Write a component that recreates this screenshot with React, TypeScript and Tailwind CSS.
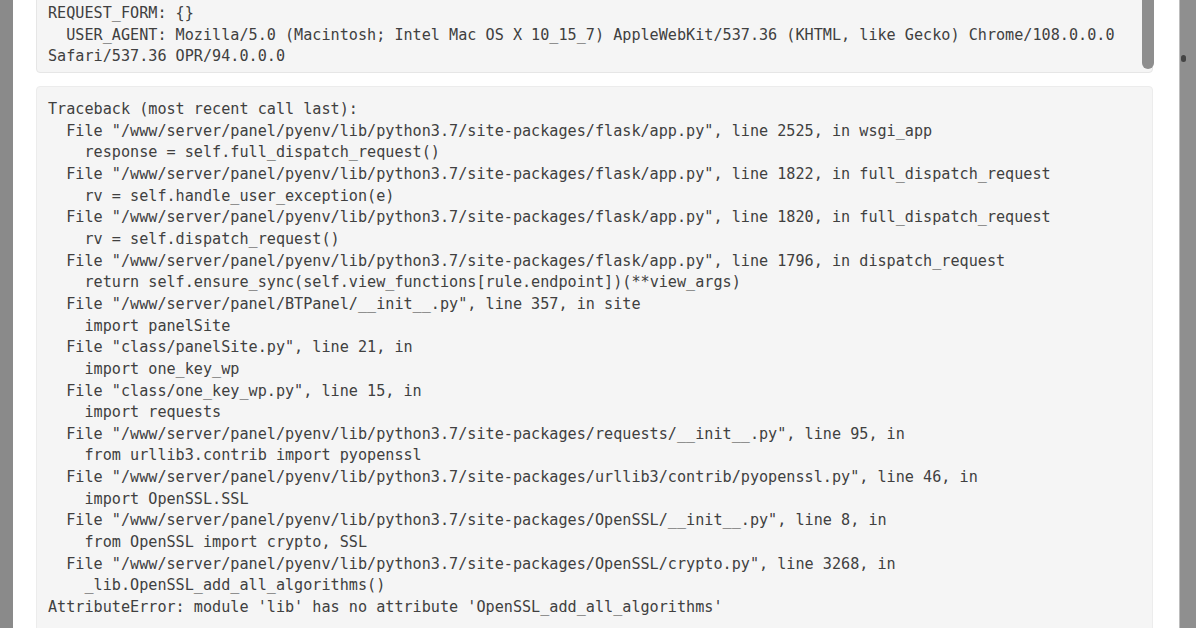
import React from 'react';

const requestLines = `REQUEST_FORM: {}
  USER_AGENT: Mozilla/5.0 (Macintosh; Intel Mac OS X 10_15_7) AppleWebKit/537.36 (KHTML, like Gecko) Chrome/108.0.0.0 Safari/537.36 OPR/94.0.0.0`;

const traceback = `Traceback (most recent call last):
  File "/www/server/panel/pyenv/lib/python3.7/site-packages/flask/app.py", line 2525, in wsgi_app
    response = self.full_dispatch_request()
  File "/www/server/panel/pyenv/lib/python3.7/site-packages/flask/app.py", line 1822, in full_dispatch_request
    rv = self.handle_user_exception(e)
  File "/www/server/panel/pyenv/lib/python3.7/site-packages/flask/app.py", line 1820, in full_dispatch_request
    rv = self.dispatch_request()
  File "/www/server/panel/pyenv/lib/python3.7/site-packages/flask/app.py", line 1796, in dispatch_request
    return self.ensure_sync(self.view_functions[rule.endpoint])(**view_args)
  File "/www/server/panel/BTPanel/__init__.py", line 357, in site
    import panelSite
  File "class/panelSite.py", line 21, in
    import one_key_wp
  File "class/one_key_wp.py", line 15, in
    import requests
  File "/www/server/panel/pyenv/lib/python3.7/site-packages/requests/__init__.py", line 95, in
    from urllib3.contrib import pyopenssl
  File "/www/server/panel/pyenv/lib/python3.7/site-packages/urllib3/contrib/pyopenssl.py", line 46, in
    import OpenSSL.SSL
  File "/www/server/panel/pyenv/lib/python3.7/site-packages/OpenSSL/__init__.py", line 8, in
    from OpenSSL import crypto, SSL
  File "/www/server/panel/pyenv/lib/python3.7/site-packages/OpenSSL/crypto.py", line 3268, in
    _lib.OpenSSL_add_all_algorithms()
AttributeError: module 'lib' has no attribute 'OpenSSL_add_all_algorithms'

`;

const mono = "font-['DejaVu_Sans_Mono','Liberation_Mono',monospace] text-[15.15px] leading-[21.65px] text-[#404040]";

export default function App() {
  return (
    <div className="flex h-[628px] w-[1196px] overflow-hidden bg-[#8c8c8c]">
      <div className="w-[13px] shrink-0 bg-[#8a8a8a]" />
      <div className="flex flex-1 flex-col overflow-hidden bg-white pl-[23px] pr-[26px]">
        <div className="relative -mt-[8px] rounded-b-[4px] border border-[#e6e6e6] bg-[#f5f5f5]">
          <pre className={`${mono} whitespace-pre-wrap break-words px-[11px] pb-[4px] pt-[10px] pr-[30px]`}>
            {requestLines}
          </pre>
          <div className="absolute right-[-2px] top-0 h-[76px] w-[12px] rounded-b-full bg-[#8e8e8e]" />
        </div>
        <div className="mt-[13px] flex-1 rounded-t-[4px] border border-[#ececec] bg-[#f5f5f5]">
          <pre className={`${mono} whitespace-pre-wrap px-[11px] pt-[12px]`}>{traceback}</pre>
        </div>
      </div>
      <div className="relative w-[17px] shrink-0 border-l border-[#bdbdbd] bg-[#8f8f8f]">
        <div className="absolute left-[1px] top-[55px] h-[7px] w-[5px] rounded-full bg-[#444]" />
      </div>
    </div>
  );
}
